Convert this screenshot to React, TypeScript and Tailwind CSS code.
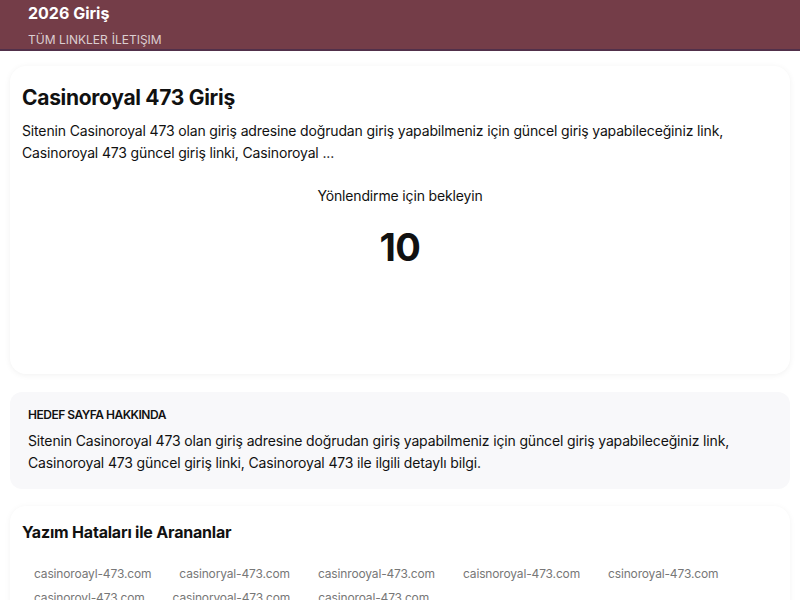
import React from 'react';

const typos = [
  'casinoroayl-473.com',
  'casinoryal-473.com',
  'casinrooyal-473.com',
  'caisnoroyal-473.com',
  'csinoroyal-473.com',
  'casinoroyl-473.com',
  'casinoryoal-473.com',
  'casinoroal-473.com',
];

export default function App() {
  return (
    <div className="min-h-screen bg-white text-[#111] font-['Inter',sans-serif]">
      <header className="bg-[#743d48] border-b-2 border-[#51304a] pl-7 h-[51px]">
        <div className="text-white text-base font-bold leading-none pt-[5px]">2026 Giriş</div>
        <nav className="text-[12px] text-white/75 leading-none mt-[13px] flex gap-1">
          <span>TÜM LINKLER</span>
          <span>İLETIŞIM</span>
        </nav>
      </header>

      <main className="px-[10px] pt-[15px]">
        {/* yönlendirme kartı */}
        <section className="rounded-2xl bg-white shadow-[0_1px_6px_rgba(0,0,0,0.06)] px-3 pt-[18px] h-[308px]">
          <h1 className="text-[21px] font-bold leading-7 tracking-[-0.3px]">Casinoroyal 473 Giriş</h1>
          <p className="mt-2 text-sm leading-[22px] tracking-[-0.15px]">
            Sitenin Casinoroyal 473 olan giriş adresine doğrudan giriş yapabilmeniz için güncel giriş yapabileceğiniz link,
            Casinoroyal 473 güncel giriş linki, Casinoroyal ...
          </p>
          <div className="mt-[21px] text-center text-sm leading-[22px] tracking-[-0.15px]">Yönlendirme için bekleyin</div>
          <div className="mt-[16px] text-center text-[38px] font-bold leading-[48px] tracking-[-0.5px]">10</div>
        </section>

        {/* hedef sayfa bilgisi */}
        <section className="mt-[18px] rounded-xl bg-[#f8f8fa] px-[18px] pt-[15px] pb-[15px]">
          <h2 className="text-[12px] font-semibold leading-4 tracking-[-0.5px]">HEDEF SAYFA HAKKINDA</h2>
          <p className="mt-[7px] text-sm leading-[22px] tracking-[-0.15px]">
            Sitenin Casinoroyal 473 olan giriş adresine doğrudan giriş yapabilmeniz için güncel giriş yapabileceğiniz link,
            Casinoroyal 473 güncel giriş linki, Casinoroyal 473 ile ilgili detaylı bilgi.
          </p>
        </section>

        {/* yazım hataları */}
        <section className="mt-[17px] rounded-2xl bg-white shadow-[0_1px_6px_rgba(0,0,0,0.05)] px-3 pt-[14px] pb-4">
          <h2 className="text-base font-bold leading-6 tracking-[-0.2px]">Yazım Hataları ile Arananlar</h2>
          <ul className="mt-[18px] flex flex-wrap gap-x-1 text-[12px] text-[#777] leading-6 tracking-[-0.15px]">
            {typos.map((t) => (
              <li key={t} className="px-3">{t}</li>
            ))}
          </ul>
        </section>
      </main>
    </div>
  );
}
